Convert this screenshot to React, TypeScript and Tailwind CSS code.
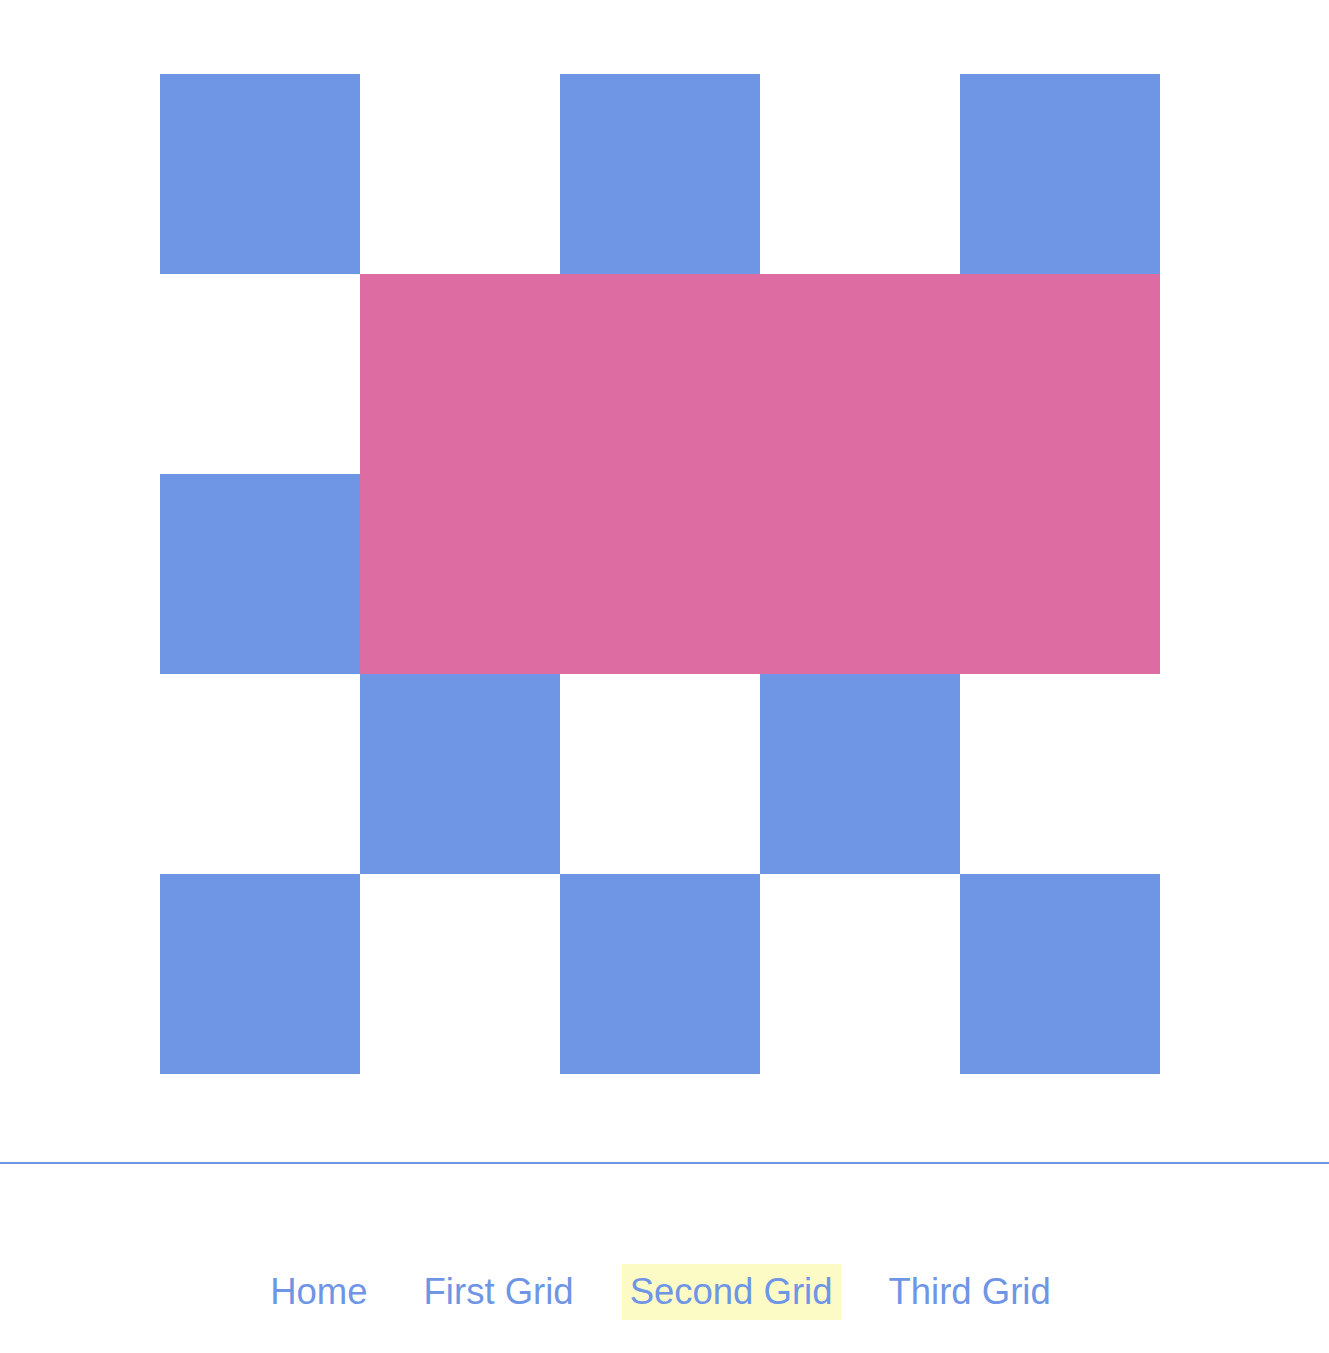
const blueCells = [
  "col-start-1 row-start-1",
  "col-start-3 row-start-1",
  "col-start-5 row-start-1",
  "col-start-1 row-start-3",
  "col-start-2 row-start-4",
  "col-start-4 row-start-4",
  "col-start-1 row-start-5",
  "col-start-3 row-start-5",
  "col-start-5 row-start-5",
];

const links = [
  { label: "Home", active: false },
  { label: "First Grid", active: false },
  { label: "Second Grid", active: true },
  { label: "Third Grid", active: false },
];

export default function App() {
  return (
    <div className="min-h-screen bg-white font-['Liberation_Sans',Arial,sans-serif]">
      {/* Second grid */}
      <div className="ml-[160px] pt-[74px]">
        <div className="grid grid-cols-[repeat(5,200px)] grid-rows-[repeat(5,200px)]">
          {blueCells.map((c) => (
            <div key={c} className={`${c} bg-[#6f95e5]`} />
          ))}
          <div className="col-start-2 col-span-4 row-start-2 row-span-2 bg-[#dc6ca1]" />
        </div>
      </div>

      <div className="mt-[88px] h-[2px] bg-[#6f95e5]" />

      {/* Nav */}
      <nav className="mt-[100px] flex justify-center gap-10 pr-2">
        {links.map((l) => (
          <a
            key={l.label}
            href="#"
            className={`px-2 text-[36.5px] leading-[56px] text-[#6f95e5] ${
              l.active ? "bg-[#fcfac5]" : ""
            }`}
          >
            {l.label}
          </a>
        ))}
      </nav>
    </div>
  );
}
